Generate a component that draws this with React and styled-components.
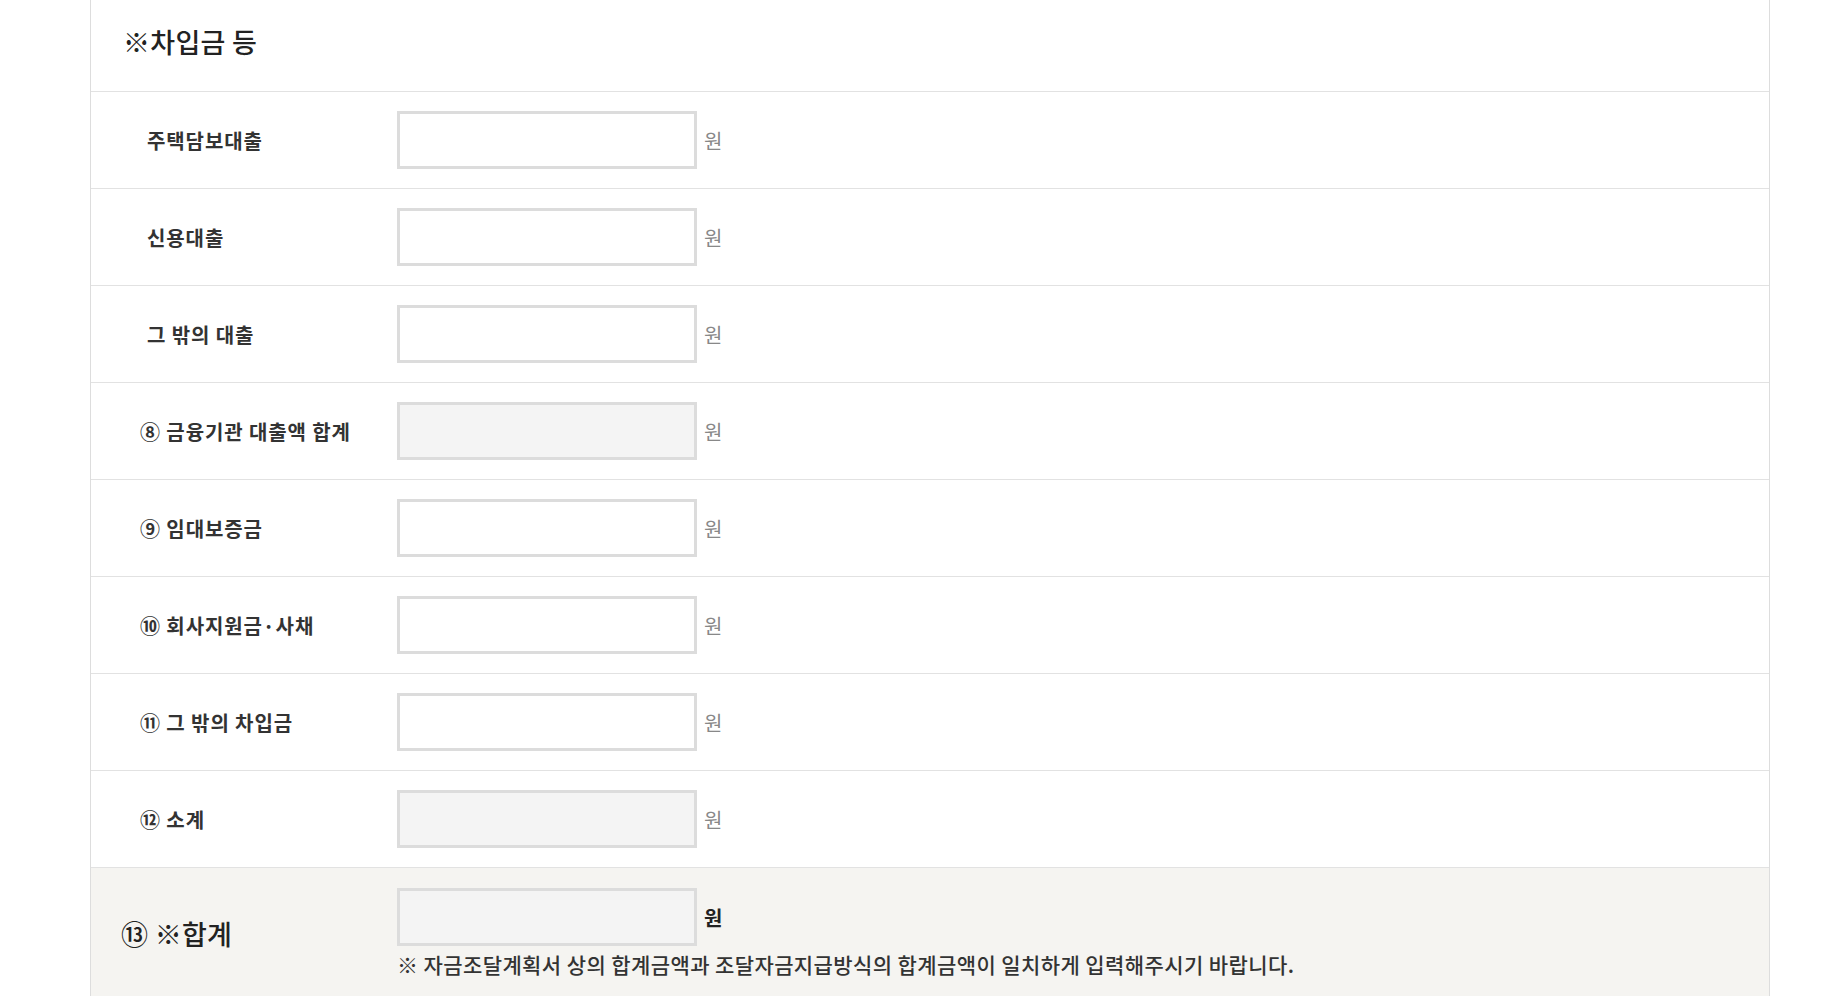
import React from 'react';
import styled, { createGlobalStyle } from "styled-components";

const Global = createGlobalStyle`
body {
  margin: 0;
  background: #fff;
  font-family: "Noto Sans CJK KR", "Noto Sans", sans-serif;
  color: #333;
}
`;

const Wrap = styled.div`
width: 1680px;
margin-left: 90px;
border-left: 1px solid #ddd;
border-right: 1px solid #ddd;
box-sizing: border-box;
`;

const Head = styled.div`
height: 92px;
display: flex;
align-items: center;
padding-left: 32px;
padding-bottom: 8px;
box-sizing: border-box;
border-bottom: 1px solid #e2e2e2;
`;

const Title = styled.h3`
margin: 0;
font-size: 27px;
font-weight: 500;
color: #222;
letter-spacing: 0.3px;
`;

const Row = styled.div`
display: flex;
align-items: center;
height: 97px;
box-sizing: border-box;
border-bottom: 1px solid #e2e2e2;
`;

const Label = styled.div`
width: 306px;
box-sizing: border-box;
padding-left: ${(p) => (p.$num ? "49px" : "56px")};
font-size: 20px;
font-weight: 700;
color: #333;
letter-spacing: 0.9px;
`;

const Field = styled.div`
display: flex;
align-items: center;
`;

const Input = styled.input`
width: 300px;
height: 58px;
box-sizing: border-box;
border: 3px solid #dcdcdc;
background: ${(p) => (p.readOnly ? "#f4f4f4" : "#fff")};
font-size: 18px;
padding: 0 12px;
outline: none;
`;

const Unit = styled.span`
margin-left: 7px;
font-size: 20px;
font-weight: ${(p) => (p.$bold ? 700 : 400)};
color: ${(p) => (p.$bold ? "#222" : "#888")};
`;

const Total = styled.div`
display: flex;
align-items: center;
background: #f5f4f1;
padding: 20px 0 18px;
`;

const TotalLabel = styled.div`
width: 306px;
box-sizing: border-box;
padding-left: 30px;
font-size: 27px;
font-weight: 500;
color: #222;
letter-spacing: 0.3px;
`;

const TotalBody = styled.div`
display: flex;
flex-direction: column;
gap: 4px;
`;

const Note = styled.p`
margin: 0;
font-size: 21px;
line-height: 28px;
font-weight: 500;
color: #333;
letter-spacing: 0.4px;
`;

const rows = [
  { label: "주택담보대출" },
  { label: "신용대출" },
  { label: "그 밖의 대출" },
  { label: "⑧ 금융기관 대출액 합계", num: true, ro: true },
  { label: "⑨ 임대보증금", num: true },
  { label: "⑩ 회사지원금·사채", num: true },
  { label: "⑪ 그 밖의 차입금", num: true },
  { label: "⑫ 소계", num: true, ro: true },
];

const App = () => {
  return (
    <>
      <Global />
      <Wrap>
        <Head>
          <Title>※차입금 등</Title>
        </Head>
        {rows.map((r) => (
          <Row key={r.label}>
            <Label $num={r.num}>{r.label}</Label>
            <Field>
              <Input readOnly={r.ro} />
              <Unit>원</Unit>
            </Field>
          </Row>
        ))}
        <Total>
          <TotalLabel>⑬ ※합계</TotalLabel>
          <TotalBody>
            <Field>
              <Input readOnly />
              <Unit $bold>원</Unit>
            </Field>
            <Note>※ 자금조달계획서 상의 합계금액과 조달자금지급방식의 합계금액이 일치하게 입력해주시기 바랍니다.</Note>
          </TotalBody>
        </Total>
      </Wrap>
    </>
  );
};

export default App;
